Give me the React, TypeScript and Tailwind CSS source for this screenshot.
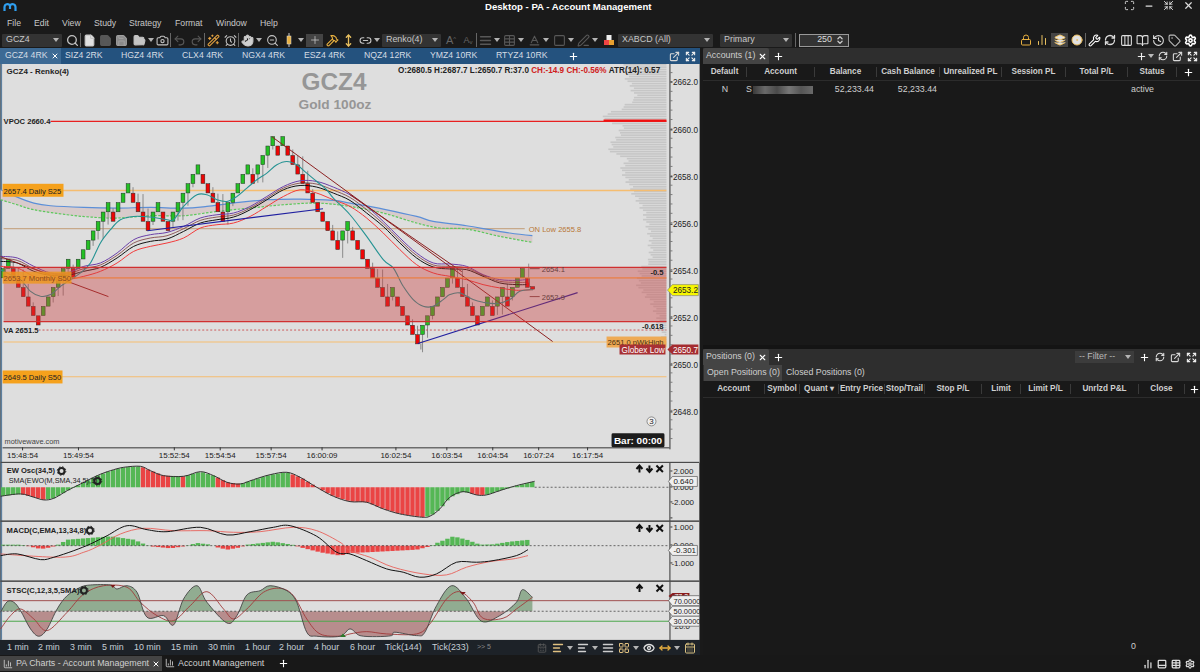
import React from "react";
import {
  Search, File, Save, FolderOpen, Camera, Undo2, Redo2, Wand2, AlarmClock, Hand, ZoomOut, Plus, Hammer, MoveVertical,
  Link2, AlignJustify, Table, Baseline, Square, PenLine, Wrench, RefreshCw, Columns3, BookOpen, History, Tag, Settings,
  X, Minus, Maximize, Expand, Shrink, ChartColumn, Eye, AlignLeft, ChevronsUpDown, ExternalLink,
  Layers, CircleDot, Lock, BarChart2, CalendarDays, LayoutGrid, PanelBottom,
} from "lucide-react";

const FONT = "font-['Liberation_Sans',Arial,sans-serif]";

// ---- chart helpers ----
const zp = (pts: number[], ox = 0, oy = 110) => {
  const out: number[][] = [];
  for (let i = 0; i < pts.length; i += 2) out.push([pts[i] / 3 + ox, pts[i + 1] / 3 + oy]);
  return out;
};
const smooth = (p: number[][]) => {
  let d = `M${p[0][0].toFixed(1)} ${p[0][1].toFixed(1)}`;
  for (let i = 0; i < p.length - 1; i++) {
    const a = p[Math.max(0, i - 1)];
    const b = p[i];
    const c = p[i + 1];
    const e = p[Math.min(p.length - 1, i + 2)];
    const c1x = b[0] + (c[0] - a[0]) / 6;
    const c1y = b[1] + (c[1] - a[1]) / 6;
    const c2x = c[0] - (e[0] - b[0]) / 6;
    const c2y = c[1] - (e[1] - b[1]) / 6;
    d += `C${c1x.toFixed(1)} ${c1y.toFixed(1)} ${c2x.toFixed(1)} ${c2y.toFixed(1)} ${c[0].toFixed(1)} ${c[1].toFixed(1)}`;
  }
  return d;
};
const lerp = (tbl: number[][], x: number) => {
  if (x <= tbl[0][0]) return tbl[0][1];
  for (let i = 1; i < tbl.length; i++) {
    if (x <= tbl[i][0]) {
      const [a, b] = tbl[i - 1];
      const [c, d] = tbl[i];
      return b + ((d - b) * (x - a)) / (c - a);
    }
  }
  return tbl[tbl.length - 1][1];
};

const BARS =
  "14g 13g 14r 15r 16r 17r 18r 19r 18g 17g 16g 15g 14g 13g 14r 13g 12g 11g 10g 9g 8g 7g 8r 7g 6g 5g 6r 7r 8r 9r 8g 7g 8r 9r 8g 7g 6g 5g 4g 3g 4r 5r 6r 7r 8r 7g 6g 5g 4g 3g 4r 3g 2g 1g 0g 1r 0g 1r 2r 3r 4r 5r 6r 7r 8r 9r 10r 11r 10g 9g 10r 11r 12r 13r 14r 15r 16r 17r 16g 17r 18r 19r 20r 21r 20g 19g 18g 17g 16g 15g 14g 15r 16r 17r 18r 19r 18g 17g 18r 17g 16g 17r 16g 15g 14g 15r"
    .split(" ")
    .map((s) => ({ k: parseInt(s), up: s.endsWith("g") }));

const PURPLE = [...zp([0,440,50,445,100,470,150,490,200,490,250,470,300,460,350,430,400,390,450,375,500,368,550,350,600,325,650,315,700,310,750,290,800,260,850,230,900,213,950,215,1000,232,1050,255]), ...zp([50,290,100,335,150,385,200,430,250,460,300,463,350,470,400,495,450,510,500,512,530,510], 350)];
const BLACK = [...zp([0,455,50,460,100,485,150,497,200,497,250,485,300,473,350,445,400,410,450,395,500,388,550,365,600,340,650,330,700,322,750,300,800,270,850,240,900,227,950,232,1000,250,1050,272]), ...zp([50,310,100,350,150,400,200,445,250,472,300,478,350,480,400,500,450,520,500,525,530,525], 350)];
const BROWN = [...zp([0,447,50,452,100,477,150,493,200,493,250,477,300,466,350,437,400,400,450,385,500,378,550,357,600,332,650,322,700,316,750,295,800,265,850,235,900,220,950,223,1000,241,1050,263]), ...zp([50,300,100,342,150,392,200,437,250,466,300,470,350,475,400,497,450,515,500,518,530,518], 350)];
const RED = [...zp([0,470,50,475,100,500,150,510,200,510,250,500,300,485,350,460,400,425,450,410,500,400,550,385,600,355,650,345,700,340,750,320,800,290,850,260,900,240,950,250,1000,270,1050,290]), ...zp([50,325,100,370,150,420,200,465,250,490,300,500,350,510,400,525,450,535,500,542,550,540], 350)];
const TEAL = [...zp([0,480,30,495,60,510,90,545,120,560,150,555,180,530,210,510,240,490,270,460,300,400,330,360,360,330,400,320,450,322,500,330,520,330,550,290,590,255,620,255,650,270,680,275,710,260,740,235,770,210,800,190,830,165,860,155,890,165,920,190,950,215,980,240,1000,265,1050,315]), ...zp([50,380,100,450,130,475,160,530,190,570,220,590,250,590,280,570,300,555,330,550,370,570,400,578,440,582,480,570,510,545,550,540], 350)];
const BLUE = [...zp([0,240,50,262,100,280,150,288,250,293,350,295,450,293,550,295,620,290,700,280,800,270,900,268,1000,272,1050,280]), ...zp([100,298,200,320,250,335,350,348,420,360,480,370,548,378], 350)];
const GREEN = [...zp([0,270,50,285,100,300,200,315,270,322,350,325,450,318,550,318,650,305,750,295,850,285,950,280,1050,290]), ...zp([100,310,200,340,270,355,350,358,450,380,548,398], 350)];

const VOL: number[][] = [[64,627],[80,627],[87,633],[97,637],[108,621],[113,607],[120,605],[125,623],[132,620],[143,613],[152,610],[157,627],[170,623],[182,628],[197,637],[210,643],[223,648],[237,650],[250,652],[260,650],[267,642],[277,640],[287,638],[300,652],[310,655],[323,660],[343,665]];

const TIMES: [string, number][] = [["15:48:54",22],["15:49:54",78],["15:52:54",174],["15:54:54",220],["15:57:54",271],["16:00:09",322],["16:02:54",396],["16:03:54",447],["16:04:54",493],["16:07:24",539],["16:17:54",588]];
const PRICES: [string, number][] = [["2662.0",82],["2660.0",130],["2658.0",177],["2656.0",224.5],["2654.0",271.5],["2652.0",318.5],["2650.0",365.5],["2648.0",412.5]];

function Txt({ x, y, c = "#222", s = 7.6, b, a, children }: { x: number; y: number; c?: string; s?: number; b?: boolean; a?: "middle" | "end"; children: React.ReactNode }) {
  return <text x={x} y={y} fill={c} fontSize={s} fontWeight={b ? 700 : 400} textAnchor={a} fontFamily="'Liberation Sans',Arial,sans-serif">{children}</text>;
}

function Gear({ x, y }: { x: number; y: number }) {
  return (
    <g>
      <circle cx={x} cy={y} r={3} fill="none" stroke="#222" strokeWidth={2} />
      <circle cx={x} cy={y} r={4.3} fill="none" stroke="#222" strokeWidth={1} strokeDasharray="1.5 1.9" />
    </g>
  );
}

function Controls({ y, down = true }: { y: number; down?: boolean }) {
  return (
    <g stroke="#111" strokeWidth={2} fill="none">
      <path d={`M640 ${y + 4}V${y - 2}M637 ${y + 0.5}L640 ${y - 3}L643 ${y + 0.5}`} />
      {down && <path d={`M650 ${y - 3}V${y + 3}M647 ${y}L650 ${y + 3.5}L653 ${y}`} />}
      <path d={`M657 ${y - 3}L663.5 ${y + 3.5}M663.5 ${y - 3}L657 ${y + 3.5}`} />
    </g>
  );
}

function AxisTicks({ from, to, step }: { from: number; to: number; step: number }) {
  const out: React.ReactNode[] = [];
  for (let y = from; y <= to; y += step) out.push(<line key={y} x1={671} x2={673} y1={y} y2={y} stroke="#555" strokeWidth={0.7} />);
  return <g>{out}</g>;
}

function Badge({ y, t, bg, c, w = 25, s = 8 }: { y: number; t: string; bg: string; c: string; w?: number; s?: number }) {
  return (
    <g>
      <path d={`M669 ${y}L673 ${y - 5}H${673 + w}V${y + 5}H673Z`} fill={bg} stroke="#444" strokeWidth={0.6} />
      <Txt x={674} y={y + 3} c={c} s={s}>{t}</Txt>
    </g>
  );
}

function MainChart() {
  const vol: React.ReactNode[] = [];
  let i = 0;
  for (let y = 64; y < 345; y += 2.35, i++) {
    const l = lerp(VOL, y) + ((i * 37) % 11 - 5) * 0.6;
    vol.push(<rect key={y} x={l} y={y} width={667 - l} height={1.6} fill="#c6c6c6" />);
  }
  return (
    <svg viewBox="0 64 700 400" className="block w-[700px] h-[400px]">
      <rect x={0} y={64} width={700} height={400} fill="#dedede" />
      <rect x={0} y={64} width={1.5} height={400} fill="#5d7f9e" />
      {vol}
      <path d={`${smooth(BLUE)}L${GREEN[GREEN.length - 1].join(" ")}${smooth(GREEN.slice().reverse()).replace(/^M/, "L")}Z`} fill="#d8cbcb" />
      <line x1={3} x2={667} y1={190.7} y2={190.7} stroke="#f5bd70" strokeWidth={1.3} />
      <line x1={3} x2={525} y1={229} y2={229} stroke="#c7a98a" strokeWidth={1.2} />
      <line x1={50} x2={667} y1={121.5} y2={121.5} stroke="#e82020" strokeWidth={1.3} />
      <line x1={604} x2={667} y1={120.7} y2={120.7} stroke="#f01010" strokeWidth={2} />
      <line x1={3} x2={667} y1={342.5} y2={342.5} stroke="#f5bd70" strokeWidth={1.2} />
      <line x1={3} x2={667} y1={377.3} y2={377.3} stroke="#f5bd70" strokeWidth={1.2} />
      <path d={smooth(BLUE)} fill="none" stroke="#5b8fd8" strokeWidth={1.2} />
      <path d={smooth(GREEN)} fill="none" stroke="#5cc85c" strokeWidth={1.2} strokeDasharray="2.5 1.5" />
      {BARS.map((b, n) => {
        const x = 2.67 + 5 * n;
        const top = 136.7 + 9.45 * b.k;
        const h = [0, 4, 9, 0, 13, 6, 0, 18][(n * 5 + 3) % 8];
        return (
          <g key={n}>
            {h > 0 && <line x1={x} x2={x} y1={b.up ? top + 9 : top - h} y2={b.up ? top + 9 + h : top} stroke="#808080" strokeWidth={0.9} />}
            <rect x={x - 1.9} y={top} width={3.8} height={9.2} fill={b.up ? "#24c024" : "#ee0505"} stroke="#25302a" strokeWidth={0.5} />
          </g>
        );
      })}
      <rect x={531} y={287} width={4} height={2.5} fill="#ee0505" stroke="#222" strokeWidth={0.5} />
      <line x1={529} x2={529} y1={264} y2={283} stroke="#808080" strokeWidth={0.8} />
      <line x1={421} x2={421} y1={344} y2={350} stroke="#808080" strokeWidth={1} />
      <path d={smooth(PURPLE)} fill="none" stroke="#6a3fa8" strokeWidth={1} />
      <path d={smooth(BROWN)} fill="none" stroke="#6a2020" strokeWidth={0.7} />
      <path d={smooth(BLACK)} fill="none" stroke="#111" strokeWidth={1} />
      <path d={smooth(RED)} fill="none" stroke="#f23a3a" strokeWidth={1} />
      <path d={smooth(TEAL)} fill="none" stroke="#259393" strokeWidth={1.1} />
      <line x1={272} y1={137} x2={553} y2={342} stroke="#8c2020" strokeWidth={1} />
      <line x1={350} y1={195} x2={462} y2={272} stroke="#8c2020" strokeWidth={1} />
      <line x1={0} y1={257} x2={108} y2={297} stroke="#8c2020" strokeWidth={1} />
      <line x1={147} y1={231} x2={323} y2={209} stroke="#2020a0" strokeWidth={1.1} />
      <line x1={418} y1={344} x2={578} y2={293} stroke="#2020a0" strokeWidth={1.1} />
      <line x1={530} x2={540} y1={269} y2={269} stroke="#7a4a4a" strokeWidth={1} />
      <line x1={530} x2={540} y1={297} y2={297} stroke="#7a4a4a" strokeWidth={1} />
      <rect x={3} y={267.7} width={664} height={54.5} fill="rgba(202,62,62,.4)" />
      <line x1={3} x2={667} y1={267.7} y2={267.7} stroke="#d03030" strokeWidth={1.3} />
      <line x1={3} x2={667} y1={322} y2={322} stroke="#d03030" strokeWidth={1.3} />
      <line x1={3} x2={667} y1={278.3} y2={278.3} stroke="#f0762c" strokeWidth={1} />
      <line x1={38} x2={667} y1={330.5} y2={330.5} stroke="#c83a3a" strokeWidth={0.8} strokeDasharray="2 2" />

      <rect x={2} y={184} width={61} height={13} fill="#f5a11c" />
      <Txt x={3} y={194}>2657.4 Daily S25</Txt>
      <rect x={2} y={272} width={69} height={12} fill="#ed9620" opacity={0.85} />
      <Txt x={3} y={281} c="#8a4a20">2653.7 Monthly S50</Txt>
      <rect x={2} y={371} width={60} height={13} fill="#f5a11c" />
      <Txt x={3} y={380.5}>2649.5 Daily S50</Txt>
      <Txt x={3} y={124} b>VPOC 2660.4</Txt>
      <Txt x={3} y={333} b>VA 2651.5</Txt>
      <Txt x={529} y={232} c="#b87838">ON Low 2655.8</Txt>
      <Txt x={542} y={272} c="#6a4040">2654.1</Txt>
      <Txt x={542} y={300} c="#6a4040">2652.9</Txt>
      <Txt x={664} y={275} a="end" b>-0.5</Txt>
      <Txt x={664} y={329} a="end" b>-0.618</Txt>
      <rect x={607} y={337} width={60} height={11} fill="#eeaa55" />
      <Txt x={608} y={345.5} c="#4a3010">2651.0 pWkHigh</Txt>
      <rect x={620} y={345} width={46} height={10} fill="#a83034" />
      <Txt x={622} y={353.5} c="#fff" s={8.2}>Globex Low</Txt>

      <Txt x={334} y={90} c="#969696" s={24.4} b a="middle">GCZ4</Txt>
      <Txt x={335} y={109} c="#969696" s={13.7} b a="middle">Gold 100oz</Txt>
      <Txt x={6} y={74} s={8} b>GCZ4 - Renko(4)</Txt>
      <text y={73} fontSize={8.15} fontWeight={700} fontFamily="'Liberation Sans',Arial,sans-serif" x={398}>
        <tspan fill="#222">O:2680.5 H:2687.7 L:2650.7 R:37.0 </tspan>
        <tspan fill="#d02020">CH:-14.9 CH:-0.56% </tspan>
        <tspan fill="#222">ATR(14): 0.57</tspan>
      </text>

      {/* axes */}
      <rect x={671} y={64} width={29} height={400} fill="#dedede" />
      <line x1={670.5} x2={670.5} y1={64} y2={450} stroke="#333" strokeWidth={1} />
      <AxisTicks from={72.6} to={445} step={9.4} />
      {PRICES.map(([t, y]) => (
        <g key={t}>
          <line x1={671} x2={673} y1={y} y2={y} stroke="#222" />
          <Txt x={673.5} y={y + 3} s={8.2}>{t}</Txt>
        </g>
      ))}
      <path d="M668 290.5L673 285H699V296H673Z" fill="#f7f700" stroke="#777" strokeWidth={0.6} />
      <Txt x={673.5} y={293.6} s={8.2} c="#222">2653.2</Txt>
      <path d="M668 350L673 345H699V355H673Z" fill="#a42c30" />
      <Txt x={673.5} y={353} s={8.2} c="#fff">2650.7</Txt>
      <line x1={2} x2={670} y1={448.5} y2={448.5} stroke="#333" strokeWidth={1} />
      {TIMES.map(([t, x]) => (
        <g key={t}>
          <line x1={x} x2={x} y1={448} y2={451} stroke="#333" />
          <Txt x={x} y={459} s={8} a="middle">{t}</Txt>
        </g>
      ))}
      <Txt x={4} y={445} c="#444" s={7.4}>motivewave.com</Txt>
      <circle cx={652} cy={422} r={4.5} fill="#f0f0f0" stroke="#666" strokeWidth={0.7} />
      <Txt x={652} y={425} a="middle" s={8}>3</Txt>
      <rect x={612} y={434} width={53} height={14} rx={1.5} fill="#1c1c1c" />
      <Txt x={638.5} y={444.5} c="#fff" s={10} b a="middle">Bar: 00:00</Txt>
      <rect x={0} y={462.5} width={700} height={1.5} fill="#4a4a4a" />
    </svg>
  );
}

const EW = [[0,112],[60,105],[100,115],[130,123],[160,118],[200,95],[240,75],[290,50],[330,35],[370,25],[420,22],[450,35],[490,50],[550,52],[600,38],[640,50],[680,70],[720,75],[760,62],[810,47],[860,40],[900,55],[950,85],[1000,112],[1050,128],[1100,130],[1150,150],[1200,165],[1265,175],[1290,172],[1320,150],[1350,115],[1390,98],[1430,108],[1460,108],[1500,95],[1550,80],[1605,67]];
const EW_RED = [[60,135],[420,510],[540,555],[640,720],[870,1095],[1095,1275],[1410,1455]];

function EwPanel() {
  const bars: React.ReactNode[] = [];
  for (let z = 0; z < 1605; z += 15) {
    const x = z / 3;
    const top = lerp(EW, z + 7) / 3 + 460;
    const red = EW_RED.some(([a, b]) => z >= a && z < b);
    const zero = 488.3;
    bars.push(<rect key={z} x={x + 0.4} y={Math.min(top, zero)} width={4.4} height={Math.abs(top - zero)} fill={red ? "#ea4444" : "#55b755"} />);
  }
  return (
    <svg viewBox="0 464 700 59" className="block w-[700px] h-[59px]">
      <rect x={0} y={464} width={700} height={59} fill="#dedede" />
      <rect x={0} y={464} width={1.5} height={59} fill="#5d7f9e" />
      {bars}
      <path d={smooth(EW.map(([a, b]) => [a / 3, b / 3 + 460]))} fill="none" stroke="#333" strokeWidth={1} />
      <line x1={535} x2={670} y1={488.3} y2={488.3} stroke="#333" strokeWidth={0.7} strokeDasharray="2 2" />
      <Txt x={6} y={474.5} b>EW Osc(34,5)</Txt>
      <Gear x={61} y={472} />
      <Txt x={8} y={484.5} s={7.3}>SMA(EWO(M,SMA,34,5),1)</Txt>
      <Gear x={97} y={482} />
      <Controls y={469.5} />
      <line x1={670.5} x2={670.5} y1={464} y2={523} stroke="#333" />
      {[472, 488, 503, 519].map((y) => <line key={y} x1={671} x2={673} y1={y} y2={y} stroke="#333" />)}
      <Txt x={674} y={475} s={8}>2.000</Txt>
      <Txt x={674} y={491} s={8}>0.000</Txt>
      <Txt x={672} y={506} s={8}>-2.000</Txt>
      <Badge y={482.5} t="0.640" bg="#efefef" c="#222" />
      <rect x={0} y={521.5} width={700} height={1.5} fill="#4a4a4a" />
    </svg>
  );
}

const MACDB = [[0,3],[60,3],[75,0],[120,-10],[150,-5],[170,2],[200,18],[290,25],[330,28],[400,18],[430,5],[450,-2],[510,-8],[550,-2],[590,8],[630,3],[650,-5],[680,-12],[720,-5],[740,3],[820,12],[880,2],[900,-5],[960,-20],[1020,-30],[1050,-22],[1100,-20],[1250,-12],[1290,-2],[1310,8],[1360,28],[1400,18],[1440,3],[1480,4],[1530,12],[1590,18]];
const MACD_K = [...zp([0,290,50,285,120,302,160,295,220,275,270,255,320,230,380,200,440,212,500,218,600,205,680,228,750,218,820,205,870,200,950,232,1010,280,1050,285], 0, 460), ...zp([50,305,110,330,160,340,210,355,260,345,320,310,380,310,430,305,500,290,535,272], 350, 460)];
const MACD_D = [...zp([0,285,180,295,250,280,300,258,360,225,430,208,520,215,620,215,700,220,780,218,880,205,950,215,1020,250,1050,275], 0, 460), ...zp([60,295,130,325,220,345,290,348,350,325,420,308,490,300,535,290], 350, 460)];

function MacdPanel() {
  const bars: React.ReactNode[] = [];
  for (let z = 0; z < 1590; z += 15) {
    const v = lerp(MACDB, z + 7) / 3;
    bars.push(<rect key={z} x={z / 3 + 0.4} y={v > 0 ? 546.7 - v : 546.7} width={4.4} height={Math.abs(v)} fill={v > 0 ? "#55b755" : "#ea4444"} />);
  }
  return (
    <svg viewBox="0 523 700 60" className="block w-[700px] h-[60px]">
      <rect x={0} y={523} width={700} height={60} fill="#dedede" />
      <rect x={0} y={523} width={1.5} height={60} fill="#5d7f9e" />
      {bars}
      <line x1={2} x2={670} y1={546.7} y2={546.7} stroke="#333" strokeWidth={0.7} strokeDasharray="2 2" />
      <path d={smooth(MACD_D)} fill="none" stroke="#e8605a" strokeWidth={0.9} />
      <path d={smooth(MACD_K)} fill="none" stroke="#111" strokeWidth={1} />
      <Txt x={6} y={534} b>MACD(C,EMA,13,34,8)</Txt>
      <Gear x={89.5} y={531.5} />
      <Controls y={529} />
      <line x1={670.5} x2={670.5} y1={523} y2={583} stroke="#333" />
      {[528, 546, 564].map((y) => <line key={y} x1={671} x2={673} y1={y} y2={y} stroke="#333" />)}
      <Txt x={674} y={531} s={8}>1.000</Txt>
      <Txt x={674} y={549} s={8}>0.000</Txt>
      <Txt x={672} y={567} s={8}>-1.000</Txt>
      <Badge y={551.5} t="-0.301" bg="#efefef" c="#222" />
      <rect x={0} y={581.5} width={700} height={1.5} fill="#4a4a4a" />
    </svg>
  );
}

const K = [...zp([0,460,20,428,40,430,60,455,90,510,115,532,140,510,170,450,200,410,240,385,270,378,330,378,350,390,380,380,410,400,440,475,490,470,520,498,550,420,590,380,620,430,680,492,710,470,740,408,780,395,810,380,860,395,890,430,920,520,950,532,1020,532,1050,510], 0, 460), ...zp([30,530,80,533,125,530,135,520,200,530,225,520,260,440,305,380,350,420,395,487,450,470,500,430,518,392,548,415], 350, 460)];
const D = [...zp([0,510,30,470,60,450,100,480,140,515,200,460,250,405,310,380,380,385,420,430,470,470,520,485,570,440,620,398,670,450,700,480,740,450,790,400,840,388,880,410,920,480,960,525,1020,532,1050,525], 0, 460), ...zp([50,518,110,525,200,525,240,495,290,420,330,398,370,430,400,478,460,478,500,450,548,415], 350, 460)];

function StscPanel() {
  const poly = `${smooth(K)}L532.7 612.3L0 612.3Z`;
  return (
    <svg viewBox="0 583 700 58" className="block w-[700px] h-[58px]">
      <defs>
        <clipPath id="above"><rect x={0} y={583} width={700} height={29.3} /></clipPath>
        <clipPath id="below"><rect x={0} y={612.3} width={700} height={30} /></clipPath>
      </defs>
      <rect x={0} y={583} width={700} height={58} fill="#dedede" />
      <rect x={0} y={583} width={1.5} height={58} fill="#5d7f9e" />
      <path d={poly} fill="#91ac91" clipPath="url(#above)" />
      <path d={poly} fill="#b78d8d" clipPath="url(#below)" />
      <line x1={2} x2={670} y1={601.7} y2={601.7} stroke="#a05050" strokeWidth={1} />
      <line x1={2} x2={670} y1={612.3} y2={612.3} stroke="#333" strokeWidth={0.7} strokeDasharray="2 2" />
      <line x1={2} x2={670} y1={622.3} y2={622.3} stroke="#4ca84c" strokeWidth={1} />
      <path d={smooth(D)} fill="none" stroke="#a03a3a" strokeWidth={0.9} />
      <path d={smooth(K)} fill="none" stroke="#444" strokeWidth={0.9} />
      <path d="M110 586L115 586L112.5 589Z" fill="#7a1818" />
      <path d="M460 593L466 593L463 596Z" fill="#7a1818" />
      <path d="M340 638L346 638L343 634.5Z" fill="#2a7a2a" />
      <Txt x={6} y={594} b>STSC(C,12,3,5,SMA)</Txt>
      <Gear x={83.5} y={591.5} />
      <Controls y={589} down={false} />
      <line x1={670.5} x2={670.5} y1={583} y2={641} stroke="#333" />
      <path d="M669 597L673 594H690V600H673Z" fill="#8a1c1c" />
      <Txt x={675} y={600} c="#fff" s={7}>77.2</Txt>
      <Txt x={675} y={630.5} s={8}>20.0</Txt>
      <Badge y={601.7} t="70.0000" bg="#efefef" c="#222" w={27} s={7.5} />
      <Badge y={612.3} t="50.0000" bg="#efefef" c="#222" w={27} s={7.5} />
      <Badge y={622.3} t="30.0000" bg="#efefef" c="#222" w={27} s={7.5} />
    </svg>
  );
}

// ---- chrome ----
function Ic({ w = "w-4", children }: { w?: string; children: React.ReactNode }) {
  return <span className={`${w} h-4 flex items-center justify-center shrink-0`}>{children}</span>;
}
const Caret = () => <span className="w-[7px] shrink-0 flex justify-center"><span className="border-x-[3px] border-x-transparent border-t-[4px] border-t-[#b4b4b4] w-0 h-0" /></span>;
const Sep = () => <span className="w-px h-[14px] bg-[#666] shrink-0" />;
const ic = "size-[13px] text-[#c4c4c4]";
const dim = "size-[13px] text-[#585858]";

function Select({ w, children }: { w: string; children: React.ReactNode }) {
  return (
    <span className={`${w} h-[13px] bg-[#333333] flex items-center justify-between pl-[4px] pr-[3px] text-[#c8c8c8] shrink-0 rounded-[1px]`}>
      <span>{children}</span>
      <Caret />
    </span>
  );
}

function Toolbar() {
  return (
    <div className="h-[16px] flex items-center pl-[2px] text-[8.9px]">
      <Select w="w-[60px]">GCZ4</Select>
      <span className="w-[2px]" />
      <Ic><Search className={ic} strokeWidth={2.4} /></Ic>
      <Sep />
      <Ic><File className={ic} fill="#e0e0e0" /></Ic>
      <Ic><Save className={dim} fill="#585858" /></Ic>
      <Ic><Save className="size-[13px] text-[#a0a0a0]" fill="#8a8a8a" /></Ic>
      <span className="w-[2px]" />
      <Ic><FolderOpen className={ic} fill="#c4c4c4" /></Ic>
      <Caret />
      <Ic><Camera className={ic} /></Ic>
      <Sep />
      <Ic><Undo2 className={dim} /></Ic>
      <span className="w-px" />
      <Ic><Redo2 className={dim} /></Ic>
      <Sep />
      <Ic><Wand2 className="size-[13px] text-[#e0a040]" /></Ic>
      <span className="w-px" />
      <Ic><AlarmClock className={ic} /></Ic>
      <Sep />
      <Ic><Hand className={ic} fill="#d0d0d0" /></Ic>
      <Caret />
      <span className="w-[2px]" />
      <Ic><ZoomOut className={ic} /></Ic>
      <span className="w-px" />
      <Ic>
        <svg width="10" height="14" viewBox="0 0 10 14"><line x1="5" x2="5" y1="0" y2="14" stroke="#ccc" /><rect x="3" y="3" width="4" height="8" fill="#e8b040" stroke="#ddd" strokeWidth=".5" /></svg>
      </Ic>
      <Caret />
      <span className="w-[2px]" />
      <span className="w-[17px] h-[13px] bg-[#444] flex items-center justify-center shrink-0"><Plus className="size-[12px] text-[#ccc]" strokeWidth={1.5} /></span>
      <span className="w-px" />
      <Ic><Hammer className="size-[13px] text-[#e8b040]" /></Ic>
      <Ic><MoveVertical className="size-[13px] text-[#e8c060]" strokeWidth={2.5} /></Ic>
      <span className="w-px" />
      <Ic><Link2 className={ic} /></Ic>
      <Caret />
      <span className="w-[2px]" />
      <Select w="w-[59px]">Renko(4)</Select>
      <span className="w-[2px]" />
      <Ic><span className="text-[#666] text-[11px] leading-none">A<sup className="text-[6px]">^</sup></span></Ic>
      <span className="w-px" />
      <Ic><span className="text-[#666] text-[9px] leading-none">A<sub className="text-[6px]">v</sub></span></Ic>
      <Sep />
      <Ic><AlignJustify className={dim} strokeWidth={3} /></Ic>
      <Caret />
      <span className="w-[1px]" />
      <Ic><Table className={dim} /></Ic>
      <Caret />
      <span className="w-[2px]" />
      <Ic><Baseline className={dim} /></Ic>
      <Caret />
      <span className="w-[2px]" />
      <Ic><Square className={dim} /></Ic>
      <Caret />
      <span className="w-[1px]" />
      <Ic><PenLine className={dim} /></Ic>
      <Caret />
      <span className="w-[3px]" />
      <Ic>
        <svg width="10" height="10" viewBox="0 0 10 10"><rect x="2.5" y="0" width="5" height="5" fill="#eee" /><rect x="0" y="5" width="5" height="5" fill="#e44" /><rect x="5" y="5" width="5" height="5" fill="#e8a030" /></svg>
      </Ic>
      <span className="w-[1px]" />
      <Select w="w-[95px]">XABCD (All)</Select>
      <span className="w-[7px]" />
      <Select w="w-[72px]">Primary</Select>
      <span className="w-[3px]" />
      <Sep />
      <span className="w-[3px]" />
      <span className="w-[50px] h-[13px] bg-[#333] border border-[#999] flex items-center justify-end pr-[3px] gap-[3px] text-[#ddd] shrink-0">
        250 <ChevronsUpDown className="size-[10px] text-[#ccc]" strokeWidth={3} />
      </span>
      <span className="ml-auto flex items-center pr-[2px]">
        <Ic><Lock className="size-[12px] text-[#e8b040]" /></Ic>
        <Ic><BarChart2 className="size-[12px] text-[#e8c060]" /></Ic>
        <span className="w-[17px] h-[14px] mx-px bg-[#444] flex items-center justify-center"><Layers className="size-[12px] text-[#eec060]" fill="#e0e0e0" /></span>
        <Ic><CircleDot className="size-[12px] text-[#eec060]" fill="#e0e0e0" /></Ic>
        <Sep />
        <Ic><Wrench className="size-[13px] text-white" /></Ic>
        <Ic><RefreshCw className="size-[12px] text-[#ddd]" strokeWidth={2.6} /></Ic>
        <Ic><Columns3 className="size-[13px] text-[#ddd]" /></Ic>
        <Ic><BookOpen className="size-[13px] text-[#ddd]" /></Ic>
        <Ic><History className="size-[13px] text-[#ddd]" /></Ic>
        <Ic><Tag className="size-[13px] text-[#bbb]" /></Ic>
        <Ic><Settings className="size-[13px] text-white" strokeWidth={3} /></Ic>
      </span>
    </div>
  );
}

const TABS: [string, string][] = [
  ["SIZ4 2RK", "w-[56px]"], ["HGZ4 4RK", "w-[61px]"], ["CLX4 4RK", "w-[60px]"], ["NGX4 4RK", "w-[62px]"], ["ESZ4 4RK", "w-[60px]"],
  ["NQZ4 12RK", "w-[66px]"], ["YMZ4 10RK", "w-[66px]"], ["RTYZ4 10RK", "w-[72px]"],
];

function PanelIcons() {
  return (
    <>
      <ExternalLink className="size-[11px] text-[#d8d8d8]" strokeWidth={2.4} />
      <Expand className="size-[11px] text-[#f0f0f0]" strokeWidth={2.4} />
    </>
  );
}

const ACC_HEAD = ["Default", "Account", "Balance", "Cash Balance", "Unrealized PL", "Session PL", "Total P/L", "Status"];
const POS_HEAD: [string, string][] = [["Account","w-[62px]"],["Symbol","w-[35px]"],["Quant ▾","w-[39px]"],["Entry Price","w-[46px]"],["Stop/Trail","w-[40px]"],["Stop P/L","w-[57px]"],["Limit","w-[39px]"],["Limit P/L","w-[50px]"],["Unrlzd P&L","w-[68px]"],["Close","w-[46px]"]];

function RightSide() {
  return (
    <div className="flex-1 flex flex-col text-[8.8px] text-[#cfcfcf] ml-[3px]">
      {/* Accounts */}
      <div className="h-[297px] flex flex-col bg-[#191919]">
        <div className="h-[16px] bg-[#2e2e2e] flex items-center">
          <span className="w-[66px] h-full bg-[#444] flex items-center pl-[3px] gap-[3px] rounded-t-[2px] whitespace-nowrap">Accounts (1) <X className="size-[9px] text-white" strokeWidth={3} /></span>
          <Plus className="size-[11px] ml-[4px] text-white" strokeWidth={2.4} />
          <span className="ml-auto flex items-center gap-[4px] pr-[2px]">
            <Plus className="size-[11px] text-[#eee]" strokeWidth={2.4} /><span className="-ml-[3px] border-x-[3px] border-x-transparent border-t-[4px] border-t-[#bbb]" />
            <RefreshCw className="size-[10px] text-[#ddd]" strokeWidth={2.6} />
            <PanelIcons />
          </span>
        </div>
        <div className="h-[17px] grid grid-cols-[44px_68px_62px_63px_62px_64px_62px_49px_23px] items-center font-bold text-[8.2px] border-b border-[#2c2c2c]">
          {ACC_HEAD.map((t) => <span key={t} className="text-center border-r border-[#3a3a3a] h-[10px] leading-[10px] whitespace-nowrap">{t}</span>)}
          <Plus className="size-[11px] text-white justify-self-center" strokeWidth={2.6} />
        </div>
        <div className="h-[15px] mt-[1px] grid grid-cols-[44px_68px_62px_63px_62px_64px_62px_49px_23px] items-center">
          <span className="text-center">N</span>
          <span className="flex items-center">
            <span className="-ml-px">S</span>
            <span className="ml-px w-[60px] h-[8px] bg-[linear-gradient(90deg,#3a3a3a,#6a6a6a,#4a4a4a,#777,#555,#6a6a6a)]" />
          </span>
          <span className="text-right pr-[3px]">52,233.44</span>
          <span className="text-right pr-[3px]">52,233.44</span>
          <span /><span /><span />
          <span className="pl-[3px]">active</span>
        </div>
      </div>
      <div className="h-[4px] bg-[#141414]" />
      {/* Positions */}
      <div className="flex-1 flex flex-col bg-[#191919] relative">
        <div className="h-[16px] bg-[#2e2e2e] flex items-center">
          <span className="w-[66px] h-full bg-[#444] flex items-center pl-[3px] gap-[3px] rounded-t-[2px] whitespace-nowrap">Positions (0) <X className="size-[9px] text-white" strokeWidth={3} /></span>
          <Plus className="size-[11px] ml-[4px] text-white" strokeWidth={2.4} />
          <span className="ml-auto flex items-center gap-[5px] pr-[3px]">
            <span className="w-[59px] h-[12px] bg-[#3c3c3c] flex items-center justify-between pl-[4px] pr-[3px] text-[#b8b8b8]">-- Filter -- <Caret /></span>
            <Plus className="size-[11px] text-white" strokeWidth={2.4} />
            <RefreshCw className="size-[10px] text-[#ddd]" strokeWidth={2.6} />
            <PanelIcons />
          </span>
        </div>
        <div className="h-[16px] bg-[#2e2e2e] flex items-center">
          <span className="w-[78px] h-full bg-[#444] flex items-center pl-[3px] ml-px whitespace-nowrap">Open Positions (0)</span>
          <span className="ml-[4px]">Closed Positions (0)</span>
        </div>
        <div className="h-[17px] flex items-center font-bold text-[8.2px] border-b border-[#2c2c2c]">
          {POS_HEAD.map(([t, w]) => <span key={t} className={`${w} text-center shrink-0 border-r border-[#3a3a3a] h-[10px] leading-[10px] whitespace-nowrap`}>{t}</span>)}
          <Plus className="size-[11px] text-white ml-[4px]" strokeWidth={2.6} />
        </div>
        <div className="flex-1" />
        <div className="h-[18px] flex items-center justify-end pr-[64px] pt-[2px]">0</div>
      </div>
    </div>
  );
}

const TF: [string, string][] = [["1 min","w-[31px]"],["2 min","w-[32px]"],["3 min","w-[32px]"],["5 min","w-[32px]"],["10 min","w-[37px]"],["15 min","w-[37px]"],["30 min","w-[37px]"],["1 hour","w-[34px]"],["2 hour","w-[35px]"],["4 hour","w-[36px]"],["6 hour","w-[35px]"],["Tick(144)","w-[47px]"],["Tick(233)","w-[45px]"]];

export default function App() {
  return (
    <div className={`${FONT} w-[1200px] h-[672px] bg-[#1a1a1a] overflow-hidden flex flex-col text-[8.7px] text-[#c8c8c8]`}>
      <div className="h-[14px] relative flex items-center pl-[485px] shrink-0">
        <svg className="absolute left-[3px] top-[2px]" width="14" height="10" viewBox="0 0 14 10"><path d="M1.5 9V5a3 3 0 0 1 5.5-1.5A3 3 0 0 1 12.5 5v4M7 4v3" fill="none" stroke="#2f9ff0" strokeWidth="2.2" /></svg>
        <span className="text-white font-bold text-[9.6px]">Desktop - PA - Account Management</span>
        <span className="absolute right-[6px] top-0 flex items-center gap-[9px] text-[#ddd]">
          <Maximize className="size-[11px]" /><Minus className="size-[10px]" strokeWidth={3} /><Shrink className="size-[11px]" /><X className="size-[11px]" strokeWidth={2.6} />
        </span>
      </div>
      <div className="h-[18px] flex items-center pl-[7px] shrink-0 text-[#c8c8c8] text-[8.7px] pt-[2px]">
        {[["File","w-[27px]"],["Edit","w-[28px]"],["View","w-[32px]"],["Study","w-[35px]"],["Strategy","w-[46px]"],["Format","w-[41px]"],["Window","w-[44px]"],["Help","w-[30px]"]].map(([t, w]) => <span key={t} className={w}>{t}</span>)}
      </div>
      <Toolbar />
      <div className="flex-1 flex min-h-0">
        <div className="w-[700px] shrink-0 flex flex-col">
          <div className="h-[16px] bg-[#24527e] flex items-center text-[#d4dce4] text-[8.7px] shrink-0">
            <span className="w-[61px] h-full bg-[#3d6a94] flex items-center pl-[5px] gap-[4px] shrink-0 whitespace-nowrap">GCZ4 4RK <X className="size-[8px] text-white" strokeWidth={3} /></span>
            <span className="w-[4px]" />
            {TABS.map(([t, w]) => <span key={t} className={`${w} shrink-0 whitespace-nowrap`}>{t}</span>)}
            <Plus className="size-[11px] text-white" strokeWidth={2.4} />
            <span className="ml-auto flex items-center gap-[5px] pr-[4px]"><PanelIcons /></span>
          </div>
          <MainChart />
          <EwPanel />
          <MacdPanel />
          <StscPanel />
          <div className="h-[15px] bg-[#1d2228] flex items-center pl-[7px] text-[#c6ced6] text-[8.9px] shrink-0">
            {TF.map(([t, w]) => <span key={t} className={`${w} shrink-0 whitespace-nowrap`}>{t}</span>)}
            <span className="text-[#888] text-[7px] w-[50px]">&gt;&gt; 5</span>
            <span className="ml-[7px] flex items-center">
              <Ic><CalendarDays className="size-[10px] text-[#5a5a5a]" /></Ic>
              <Ic><AlignLeft className="size-[12px] text-[#e0c080]" strokeWidth={2.6} /></Ic><Caret />
              <span className="w-[2px]" />
              <Ic><AlignLeft className="size-[12px] text-[#d0d0d0]" strokeWidth={2.6} /></Ic><Caret />
              <span className="w-[2px]" />
              <Ic><AlignJustify className="size-[12px] text-[#ccc]" strokeWidth={3} /></Ic>
              <Ic><LayoutGrid className="size-[12px] text-[#e0c080]" /></Ic><Caret />
              <span className="w-[2px]" />
              <Ic><Eye className="size-[12px] text-[#ddd]" strokeWidth={2.6} /></Ic>
              <Ic><MoveVertical className="size-[12px] text-[#e8b040] rotate-90" strokeWidth={2.6} /></Ic><Caret />
              <span className="w-[2px]" />
              <Ic><CalendarDays className="size-[12px] text-[#d8c080]" /></Ic>
            </span>
          </div>
        </div>
        <RightSide />
      </div>
      <div className="h-[17px] flex items-center shrink-0 text-[8.9px] bg-[#181818]">
        <span className="w-[162px] h-[15px] bg-[#444] flex items-center pl-[3px] gap-[3px] text-[#d0d0d0] whitespace-nowrap">
          <ChartColumn className="size-[10px]" />PA Charts - Account Management <X className="size-[8px] text-white" strokeWidth={3} />
        </span>
        <span className="flex items-center gap-[3px] pl-[3px] text-[#d0d0d0] w-[115px] whitespace-nowrap">
          <ChartColumn className="size-[10px]" />Account Management
        </span>
        <Plus className="size-[11px] text-white ml-[1px]" strokeWidth={2.4} />
        <span className="ml-auto flex items-center gap-[4px] pr-[5px]">
          <BarChart2 className="size-[10px] text-[#ddd]" strokeWidth={3} />
          <PanelBottom className="size-[10px] text-[#ddd]" strokeWidth={3} />
          <Table className="size-[10px] text-[#ddd]" strokeWidth={3} />
          <Settings className="size-[10px] text-[#ddd]" strokeWidth={3} />
        </span>
      </div>
    </div>
  );
}
